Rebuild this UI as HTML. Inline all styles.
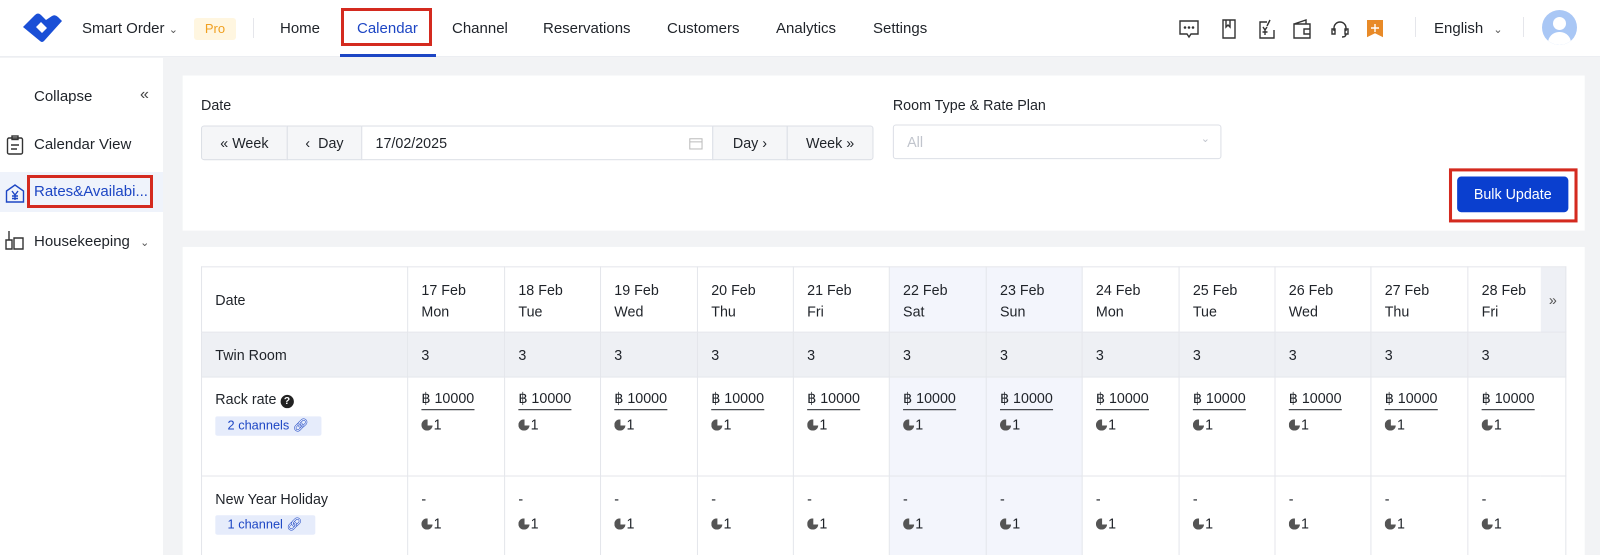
<!DOCTYPE html>
<html><head><meta charset="utf-8"><style>
*{box-sizing:border-box;margin:0;padding:0}
html,body{width:1600px;height:555px;overflow:hidden}
body{font-family:"Liberation Sans",sans-serif;color:#1f2329;background:#f2f3f5;position:relative;font-size:14px}
#c{position:absolute;left:0;top:0;width:1568px;height:544px;transform:scale(1.020408);transform-origin:0 0}
.abs{position:absolute}
.hdr{left:0;top:0;width:1600px;height:57px;background:#fff;border-bottom:1px solid #eceef2}
.nav{top:20px;font-size:15px;color:#1f2329}
.gray{left:163px;top:57px;width:1405px;height:487px;background:#f2f3f5}
.card{background:#fff}
.btn{position:absolute;top:123px;height:34px;border:1px solid #dcdfe6;background:#f5f6f8;font-size:14px;line-height:32px;text-align:center;color:#1f2329}
table{border-collapse:collapse;position:absolute;left:197px;top:261px;table-layout:fixed}
td{border:1px solid #e4e6eb;vertical-align:top;font-size:14px;padding:0 0 0 13px;color:#1f2329}
.tag{display:inline-block;background:#e6ecfb;color:#1d46c4;font-size:12.5px;padding:2px 12px;border-radius:2px}
.pr{display:inline-block;border-bottom:1px solid #1f2329;padding-bottom:2px;margin-top:12px}
.moon{display:inline-block;width:11px;height:11px;border-radius:50%;background:#555;margin-right:1px;vertical-align:-1px;clip-path:polygon(0 0,55% 0,55% 55%,100% 55%,100% 100%,0 100%)}
.we{background:#f3f5fc}
</style></head><body>
<div id="c">
<div class="abs gray"></div>
<div class="abs card" style="left:179px;top:74px;width:1374px;height:152px"></div>
<div class="abs" style="left:197px;top:95px;font-size:14px">Date</div>
<div class="abs" style="left:875px;top:95px;font-size:14px">Room Type &amp; Rate Plan</div>
<div class="btn" style="left:197px;width:85px;border-radius:3px 0 0 3px">&#171; Week</div>
<div class="btn" style="left:281px;width:74px">&#8249;&nbsp; Day</div>
<div class="btn" style="left:354px;width:345px;background:#fff;text-align:left;padding-left:13px">17/02/2025<svg style="position:absolute;right:9px;top:10px" width="14" height="13" fill="none" stroke="#bbb"><rect x="1" y="2" width="12" height="10"/><path d="M1 5h12"/></svg></div>
<div class="btn" style="left:698px;width:74px">Day &#8250;</div>
<div class="btn" style="left:771px;width:85px;border-radius:0 3px 3px 0">Week &#187;</div>
<div class="abs" style="left:875px;top:122px;width:322px;height:34px;border:1px solid #dcdfe6;border-radius:3px;color:#c0c4cc;padding:8px 13px;font-size:14px">All<span style="position:absolute;right:10px;top:6px;font-size:11px">&#8964;</span></div>
<div class="abs" style="left:1420px;top:165px;width:126px;height:53px;border:3px solid #d42a1f"></div>
<div class="abs" style="left:1428px;top:173px;width:109px;height:35px;background:#0a3fcf;border-radius:4px;color:#fff;font-size:14px;text-align:center;line-height:35px">Bulk Update</div>

<div class="abs card" style="left:179px;top:242px;width:1374px;height:313px"></div>
<table>
<colgroup><col style="width:202px"><col style="width:95px"><col style="width:94px"><col style="width:95px"><col style="width:94px"><col style="width:94px"><col style="width:95px"><col style="width:94px"><col style="width:95px"><col style="width:94px"><col style="width:94px"><col style="width:95px"><col style="width:71px"><col style="width:25px"></colgroup>
<tr style="height:64px"><td style="vertical-align:middle">Date</td>
<td style="padding-top:12px;line-height:21px">17 Feb<br>Mon</td><td style="padding-top:12px;line-height:21px">18 Feb<br>Tue</td><td style="padding-top:12px;line-height:21px">19 Feb<br>Wed</td><td style="padding-top:12px;line-height:21px">20 Feb<br>Thu</td><td style="padding-top:12px;line-height:21px">21 Feb<br>Fri</td><td class="we" style="padding-top:12px;line-height:21px">22 Feb<br>Sat</td><td class="we" style="padding-top:12px;line-height:21px">23 Feb<br>Sun</td><td style="padding-top:12px;line-height:21px">24 Feb<br>Mon</td><td style="padding-top:12px;line-height:21px">25 Feb<br>Tue</td><td style="padding-top:12px;line-height:21px">26 Feb<br>Wed</td><td style="padding-top:12px;line-height:21px">27 Feb<br>Thu</td><td style="padding-top:12px;line-height:21px;border-right:none">28 Feb<br>Fri</td><td style="background:#eef0f5;padding:0;text-align:center;vertical-align:middle;color:#555;border-left:none">&#187;</td></tr>
<tr style="height:44px;background:#eef0f4"><td style="vertical-align:middle">Twin Room</td>
<td style="vertical-align:middle">3</td><td style="vertical-align:middle">3</td><td style="vertical-align:middle">3</td><td style="vertical-align:middle">3</td><td style="vertical-align:middle">3</td><td style="vertical-align:middle">3</td><td style="vertical-align:middle">3</td><td style="vertical-align:middle">3</td><td style="vertical-align:middle">3</td><td style="vertical-align:middle">3</td><td style="vertical-align:middle">3</td><td style="vertical-align:middle" colspan="2">3</td></tr>
<tr style="height:97px"><td><div style="margin-top:13px">Rack rate <span style="display:inline-block;width:13px;height:13px;border-radius:50%;background:#222;color:#fff;font-size:10px;text-align:center;line-height:13px;font-weight:bold">?</span></div><div class="tag" style="margin-top:8px">2 channels &#128279;&#xFE0E;</div></td>
<td><span class="pr">฿ 10000</span><div style="margin-top:6px"><span class="moon"></span>1</div></td><td><span class="pr">฿ 10000</span><div style="margin-top:6px"><span class="moon"></span>1</div></td><td><span class="pr">฿ 10000</span><div style="margin-top:6px"><span class="moon"></span>1</div></td><td><span class="pr">฿ 10000</span><div style="margin-top:6px"><span class="moon"></span>1</div></td><td><span class="pr">฿ 10000</span><div style="margin-top:6px"><span class="moon"></span>1</div></td><td class="we"><span class="pr">฿ 10000</span><div style="margin-top:6px"><span class="moon"></span>1</div></td><td class="we"><span class="pr">฿ 10000</span><div style="margin-top:6px"><span class="moon"></span>1</div></td><td><span class="pr">฿ 10000</span><div style="margin-top:6px"><span class="moon"></span>1</div></td><td><span class="pr">฿ 10000</span><div style="margin-top:6px"><span class="moon"></span>1</div></td><td><span class="pr">฿ 10000</span><div style="margin-top:6px"><span class="moon"></span>1</div></td><td><span class="pr">฿ 10000</span><div style="margin-top:6px"><span class="moon"></span>1</div></td><td colspan="2"><span class="pr">฿ 10000</span><div style="margin-top:6px"><span class="moon"></span>1</div></td></tr>
<tr style="height:100px"><td><div style="margin-top:14px">New Year Holiday</div><div class="tag" style="margin-top:8px">1 channel &#128279;&#xFE0E;</div></td>
<td><div style="margin-top:14px">-</div><div style="margin-top:8px"><span class="moon"></span>1</div></td><td><div style="margin-top:14px">-</div><div style="margin-top:8px"><span class="moon"></span>1</div></td><td><div style="margin-top:14px">-</div><div style="margin-top:8px"><span class="moon"></span>1</div></td><td><div style="margin-top:14px">-</div><div style="margin-top:8px"><span class="moon"></span>1</div></td><td><div style="margin-top:14px">-</div><div style="margin-top:8px"><span class="moon"></span>1</div></td><td class="we"><div style="margin-top:14px">-</div><div style="margin-top:8px"><span class="moon"></span>1</div></td><td class="we"><div style="margin-top:14px">-</div><div style="margin-top:8px"><span class="moon"></span>1</div></td><td><div style="margin-top:14px">-</div><div style="margin-top:8px"><span class="moon"></span>1</div></td><td><div style="margin-top:14px">-</div><div style="margin-top:8px"><span class="moon"></span>1</div></td><td><div style="margin-top:14px">-</div><div style="margin-top:8px"><span class="moon"></span>1</div></td><td><div style="margin-top:14px">-</div><div style="margin-top:8px"><span class="moon"></span>1</div></td><td colspan="2"><div style="margin-top:14px">-</div><div style="margin-top:8px"><span class="moon"></span>1</div></td></tr>
</table>
</div>

<div class="abs hdr"></div>
<svg class="abs" style="left:22px;top:10px" width="42" height="34" viewBox="0 0 42 34"><path d="M1 17 L13 5 Q16 2 19 5 L24 10 L30 6 Q33 4 36 7 L40 11 L22 31 Q20 33 18 31 Z M14 17 L20 23 L25 18 L19 12 Z" fill="#1a4fd6" fill-rule="evenodd"/></svg>
<div class="abs nav" style="left:82px">Smart Order <span style="font-size:11px;color:#555">&#8964;</span></div>
<div class="abs" style="left:194px;top:18px;width:42px;height:22px;background:#fff6e0;color:#f0a020;font-size:13px;text-align:center;line-height:22px;border-radius:3px">Pro</div>
<div class="abs" style="left:253px;top:18px;width:1px;height:20px;background:#e5e6eb"></div>
<div class="abs nav" style="left:280px">Home</div>
<div class="abs" style="left:341px;top:8px;width:91px;height:38px;border:3px solid #d42a1f"></div>
<div class="abs nav" style="left:357px;color:#1d46c4">Calendar</div>
<div class="abs" style="left:340px;top:54px;width:96px;height:3px;background:#1d46c4"></div>
<div class="abs nav" style="left:452px">Channel</div>
<div class="abs nav" style="left:543px">Reservations</div>
<div class="abs nav" style="left:667px">Customers</div>
<div class="abs nav" style="left:776px">Analytics</div>
<div class="abs nav" style="left:873px">Settings</div>
<svg class="abs" style="left:1178px;top:17px" width="250" height="24" viewBox="0 0 250 24" fill="none" stroke="#333" stroke-width="1.4">
<path d="M2 4h18v13h-7l-2 3-2-3H2z"/><circle cx="7" cy="10.5" r=".6" fill="#333"/><circle cx="11" cy="10.5" r=".6" fill="#333"/><circle cx="15" cy="10.5" r=".6" fill="#333"/>
<path d="M45 3h12v18H45z M48 3v7l2-2 2 2V3"/>
<g transform="translate(4 0)"><path d="M85 5h-7v16h14v-8 M81 10l2 3 2-3 M83 13v5 M80.5 15h5 M88 3l-3 6"/></g>
<g transform="translate(2 0)"><path d="M114 7h16v14h-16z M114 7l12-4v4 M124 12h6v5h-6z"/></g>
<g transform="translate(6 0)"><path d="M150 14v-3a6 6 0 0112 0v3 M148 12h3v5h-3z M161 12h3v5h-3z M162 17q0 3-4 3"/></g>
<g transform="translate(8 0)"><rect x="181" y="3" width="16" height="18" fill="#e88a28" stroke="none"/><path d="M181 21l8-4 8 4" stroke="#fff" fill="#fff"/><path d="M189 7v8M185 11h8" stroke="#fff"/></g>
</svg>
<div class="abs" style="left:1415px;top:17px;width:1px;height:20px;background:#e5e6eb"></div>
<div class="abs nav" style="left:1434px">English <span style="font-size:11px;color:#555;margin-left:6px">&#8964;</span></div>
<div class="abs" style="left:1523px;top:17px;width:1px;height:20px;background:#e5e6eb"></div>
<div class="abs" style="left:1542px;top:10px;width:35px;height:35px;border-radius:50%;background:#a9c7f5;overflow:hidden"><div class="abs" style="left:11px;top:7px;width:13px;height:13px;border-radius:50%;background:#fff"></div><div class="abs" style="left:6px;top:22px;width:23px;height:14px;border-radius:11px 11px 0 0;background:#fff"></div></div>

<div class="abs" style="left:0;top:58px;width:163px;height:497px;background:#fff"></div>
<div class="abs" style="left:34px;top:88px;font-size:15px">Collapse</div>
<div class="abs" style="left:140px;top:86px;font-size:16px;color:#444">&#171;</div>
<svg class="abs" style="left:6px;top:135px" width="18" height="20" fill="none" stroke="#333" stroke-width="1.4"><rect x="1.5" y="3" width="15" height="16" rx="1.5"/><rect x="6" y="1" width="6" height="3.5"/><path d="M5 10h8M5 14h6"/></svg>
<div class="abs" style="left:34px;top:136px;font-size:15px">Calendar View</div>
<div class="abs" style="left:0;top:172px;width:163px;height:40px;background:#eff3fb"></div>
<svg class="abs" style="left:5px;top:183px" width="20" height="20" fill="none" stroke="#1d46c4" stroke-width="1.4"><path d="M1.5 8L10 2l8.5 6v11h-17z M7 8l3 4 3-4 M10 12v5 M7 13h6 M7 15.5h6"/></svg>
<div class="abs" style="left:27px;top:175px;width:126px;height:33px;border:3px solid #d42a1f"></div>
<div class="abs" style="left:34px;top:183px;font-size:15px;color:#1d46c4">Rates&amp;Availabi...</div>
<svg class="abs" style="left:4px;top:230px" width="22" height="20" fill="none" stroke="#333" stroke-width="1.4"><path d="M5 1v9M2 10h6v9H2z M10 8h9v11h-9z"/></svg>
<div class="abs" style="left:34px;top:233px;font-size:15px">Housekeeping <span style="font-size:11px;color:#555;margin-left:6px">&#8964;</span></div>
</body></html>
